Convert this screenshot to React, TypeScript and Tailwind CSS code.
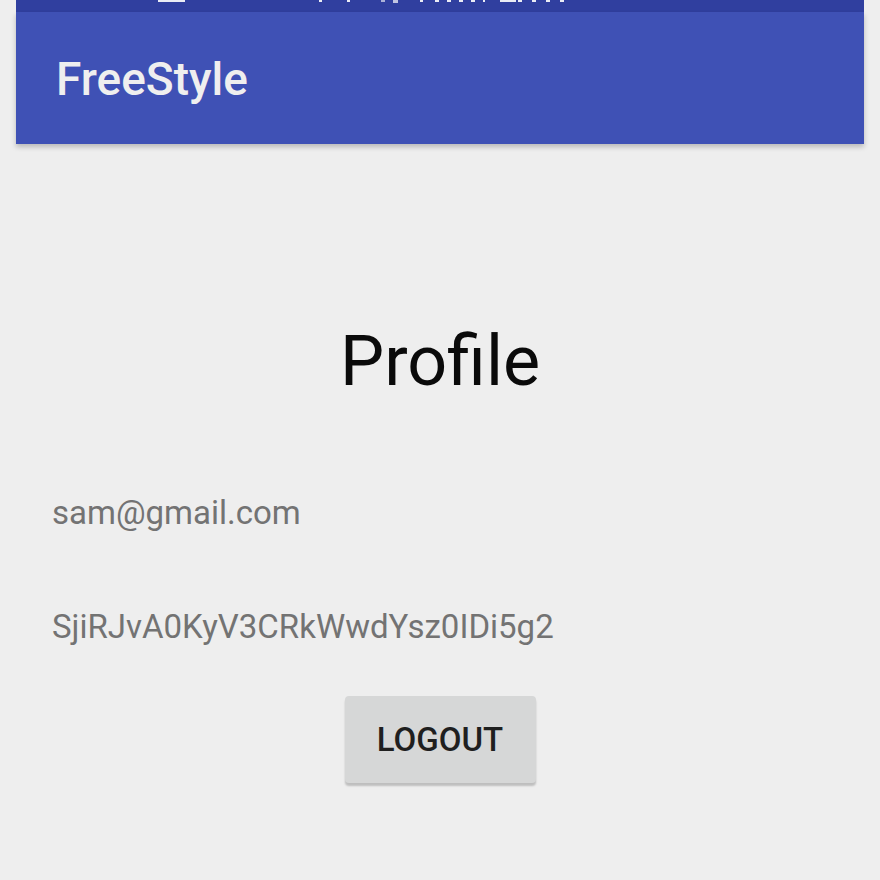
export default function App() {
  return (
    <div className="h-[880px] w-[880px] overflow-hidden bg-[#eeeeee] font-['Roboto',sans-serif]">
      <div className="mx-4 flex flex-col">
        {/* status bar, mostly cut off at the top */}
        <div className="flex h-3 items-start bg-[#303f9f] pl-[142px]">
          <span className="h-[2px] w-[27px] bg-white/90" />
          <span className="ml-[134px] h-[2px] w-[3px] bg-white/90" />
          <span className="ml-[25px] h-[2px] w-[3px] bg-white/90" />
          <span className="ml-[31px] h-[2px] w-[4px] bg-white/60" />
          <span className="ml-[8px] h-[3px] w-[5px] bg-white/70" />
          <span className="ml-[22px] h-[2px] w-[3px] bg-white/90" />
          <span className="ml-[12px] h-[2px] w-[50px] bg-[repeating-linear-gradient(90deg,rgba(255,255,255,0.9)_0_4px,transparent_4px_12px)]" />
          <span className="ml-[15px] h-[2px] w-[16px] bg-white/90" />
          <span className="ml-[2px] h-[2px] w-[52px] bg-[repeating-linear-gradient(90deg,rgba(255,255,255,0.9)_0_4px,transparent_4px_14px)]" />
        </div>
        <div className="flex h-[132px] items-center bg-[#3f51b5] pl-10 shadow-[0_3px_5px_rgba(0,0,0,0.22)]">
          <h1 className="mt-[1px] text-[46px] font-medium leading-none text-[#efefef]">FreeStyle</h1>
        </div>

        <div className="flex flex-col">
          <h2 className="mt-[182px] text-center text-[70px] leading-none text-[#0a0a0a]">Profile</h2>
          <p className="ml-9 mt-[100px] text-[33px] leading-none text-[#737373]">sam@gmail.com</p>
          <p className="ml-9 mt-[81px] text-[33px] leading-none text-[#737373]">SjiRJvA0KyV3CRkWwdYsz0IDi5g2</p>
          <div className="mt-[53px] flex justify-center">
            <button className="h-[87px] w-[191px] rounded-[4px] bg-[#d6d7d7] text-[33px] font-medium text-[#1f1f1f] shadow-[0_3px_2px_rgba(0,0,0,0.2)]">
              LOGOUT
            </button>
          </div>
        </div>
      </div>
    </div>
  );
}
